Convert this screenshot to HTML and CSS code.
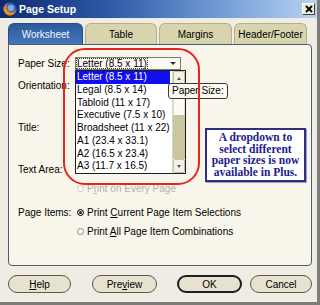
FILE: index.html
```html
<!DOCTYPE html>
<html lang="en">
<head>
    <meta charset="UTF-8">
    <title>Page Setup</title>
    <link rel="stylesheet" href="styles.css">
</head>
<body>
    <div class="window">
        <div class="titlebar">
            <svg class="app-icon" width="14" height="14" viewBox="0 0 14 14">
                <circle cx="7" cy="7" r="6.5" fill="#2f5fb0"/>
                <circle cx="8" cy="6" r="3.2" fill="#7fa8e0"/>
                <path d="M7 0.5 A6.5 6.5 0 1 0 13.5 7 C12.5 10 9 11 6.5 10 C4 9 3.2 6 4.5 3.5 C3 4 2.2 5.5 2.4 7 C1.8 4 4 1 7 0.5 Z" fill="#f08a1c"/>
            </svg>
            <span class="title">Page Setup</span>
            <span class="close">
                <svg width="8" height="8" viewBox="0 0 8 8"><path d="M1 1 L7 7 M7 1 L1 7" stroke="#000" stroke-width="1.8"/></svg>
            </span>
        </div>

        <div class="tabs">
            <div class="tab active" style="width: 75px">Worksheet</div>
            <div class="tab" style="width: 72px">Table</div>
            <div class="tab" style="width: 73px">Margins</div>
            <div class="tab" style="width: 73px">Header/Footer</div>
        </div>

        <div class="panel">
            <div class="row">
                <span class="label">Paper Size:</span>
                <div class="combo">
                    <span class="combo-text">Letter (8.5 x 11)</span>
                    <span class="combo-arrow"></span>
                </div>
            </div>
            <div class="row row-orient"><span class="label">Orientation:</span></div>
            <div class="row row-gap"><span class="label">Title:</span></div>
            <div class="row row-gap"><span class="label">Text Area:</span></div>
            <div class="row row-every">
                <span class="label"></span>
                <span class="radio off"></span>
                <span class="muted">P<u>r</u>int on Every Page</span>
            </div>
            <div class="row row-items">
                <span class="label">Page Items:</span>
                <span class="radio on"></span>
                <span>Print <u>C</u>urrent Page Item Selections</span>
            </div>
            <div class="row row-all">
                <span class="label"></span>
                <span class="radio"></span>
                <span>Print <u>A</u>ll Page Item Combinations</span>
            </div>

            <!-- open dropdown and annotations lie over the form -->
            <div class="paper-list">
                <ul class="items">
                    <li class="selected">Letter (8.5 x 11)</li>
                    <li>Legal (8.5 x 14)</li>
                    <li>Tabloid (11 x 17)</li>
                    <li>Executive (7.5 x 10)</li>
                    <li>Broadsheet (11 x 22)</li>
                    <li>A1 (23.4 x 33.1)</li>
                    <li>A2 (16.5 x 23.4)</li>
                    <li>A3 (11.7 x 16.5)</li>
                </ul>
                <div class="scrollbar">
                    <span class="sb-btn up"></span>
                    <span class="sb-track"></span>
                    <span class="sb-thumb"></span>
                    <span class="sb-btn down"></span>
                </div>
            </div>
            <div class="tooltip">Paper Size:</div>
            <div class="ring"></div>
            <div class="note">A dropdown to<br>select different<br>paper sizes is now<br>available in Plus.</div>
        </div>

        <div class="buttons">
            <div class="btn btn-help"><u>H</u>elp</div>
            <div class="btn btn-preview">Pre<u>v</u>iew</div>
            <div class="btn btn-ok">OK</div>
            <div class="btn btn-cancel">Cancel</div>
        </div>
    </div>
</body>
</html>
```

FILE: styles.css
```css
body {
    margin: 0;
    font-family: "Liberation Sans", Arial, sans-serif;
    font-size: 10px;
    color: #000;
    background: #8a8a86;
}
.window {
    width: 320px;
    height: 305px;
    box-sizing: border-box;
    background: #efede3;
    border-right: 3px solid #7c7c78;
    border-bottom: 3px solid #7c7c78;
}
.titlebar {
    height: 18px;
    display: flex;
    align-items: center;
    padding: 0 2px 0 3px;
    background: linear-gradient(to right, #0d2a72, #2f5aa8 35%, #7ea6dc 75%, #b8d2f0);
}
.app-icon {
    flex: none;
}
.title {
    margin-left: 2px;
    color: #fff;
    font-weight: bold;
    font-size: 10.5px;
}
.close {
    margin-left: auto;
    width: 11px;
    height: 10px;
    display: flex;
    align-items: center;
    justify-content: center;
    background: #ece9d8;
    border: 1px solid;
    border-color: #fff #404040 #404040 #fff;
}
.tabs {
    display: flex;
    gap: 2px;
    margin-top: 5px;
    padding-left: 8px;
    height: 21px;
}
.tab {
    display: flex;
    align-items: center;
    justify-content: center;
    background: #d8d4ad;
    border: 1px solid #b4b08a;
    border-bottom: none;
    border-radius: 6px 6px 0 0;
    box-sizing: border-box;
}
.tab.active {
    background: linear-gradient(#2c5a9c, #4677b8);
    border-color: #264e88;
    color: #f4f6ff;
}
.panel {
    position: relative;
    margin-left: 8px;
    width: 304px;
    height: 222px;
    box-sizing: border-box;
    padding: 11px 0 0 9px;
    background: #f8f6eb;
    border: 1px solid #4c5c74;
    border-radius: 0 4px 4px 4px;
}
.row {
    display: flex;
    align-items: center;
    height: 14px;
}
.row-orient { margin-top: 8px; }
.row-gap { margin-top: 28px; }
.row-every { margin-top: 5px; }
.row-items { margin-top: 10px; }
.row-all { margin-top: 5px; }
.label {
    width: 57px;
    flex: none;
}
.combo {
    width: 106px;
    height: 13px;
    box-sizing: border-box;
    border: 1px solid #7d7b6a;
    background: #fbfaf2;
    display: flex;
    align-items: center;
    padding-left: 1px;
}
.combo-text {
    outline: 1px dotted #333;
    line-height: 9px;
}
.combo-arrow {
    margin-left: auto;
    margin-right: 4px;
    border-left: 3px solid transparent;
    border-right: 3px solid transparent;
    border-top: 3px solid #333;
}
.radio {
    width: 7px;
    height: 7px;
    margin: 0 3px 0 2px;
    border: 1px solid #8a887c;
    border-radius: 50%;
    background: #fff;
    box-sizing: border-box;
}
.radio.on {
    border-color: #222;
    background: #222;
    box-shadow: inset 0 0 0 1px #f8f6eb;
}
.radio.off {
    border-color: #cfcdc0;
}
.muted {
    color: #b4b2a4;
}
.paper-list {
    position: absolute;
    left: 66px;
    top: 25px;
    width: 111px;
    height: 104px;
    box-sizing: border-box;
    border: 1px solid #1e1e1e;
    background: #fff;
    display: flex;
}
.items {
    list-style: none;
    margin: 0;
    padding: 0;
    width: 95px;
}
.items li {
    height: 12.75px;
    line-height: 12.75px;
    padding-left: 1px;
    white-space: nowrap;
}
.items li.selected {
    background: #1010ee;
    color: #fff;
}
.scrollbar {
    margin-left: 2px;
    width: 12px;
    display: flex;
    flex-direction: column;
    border-left: 1px solid #d8d6c8;
}
.sb-btn {
    height: 12px;
    display: flex;
    align-items: center;
    justify-content: center;
    background: #f3f2e8;
    border: 1px solid #c4c1a6;
    border-radius: 2px;
}
.sb-btn::after {
    content: "";
    border-left: 2.5px solid transparent;
    border-right: 2.5px solid transparent;
}
.sb-btn.up::after { border-bottom: 3px solid #555; }
.sb-btn.down::after { border-top: 3px solid #555; }
.sb-track {
    height: 30px;
    background: #fbfaf4;
    border-left: 1px solid #e0ddcc;
    border-right: 1px solid #e0ddcc;
}
.sb-thumb {
    flex: 1;
    background: #cac79e;
}
.tooltip {
    position: absolute;
    left: 159px;
    top: 38px;
    padding: 1px 3px;
    line-height: 12px;
    background: #fbfaf0;
    border: 1px solid #3a3a3a;
    border-radius: 3px;
}
.ring {
    position: absolute;
    left: 54px;
    top: 3px;
    width: 137px;
    height: 137px;
    box-sizing: border-box;
    border: 2px solid #e8241e;
    border-radius: 22px;
}
.note {
    position: absolute;
    left: 196px;
    top: 83px;
    width: 101px;
    height: 54px;
    box-sizing: border-box;
    padding-top: 2px;
    background: #fff;
    border: 2px solid #2e2e82;
    box-shadow: 1px 1px 0 #a0a0bc;
    color: #1c1c8a;
    font-family: "Liberation Serif", "Times New Roman", serif;
    font-weight: bold;
    font-size: 11.5px;
    line-height: 11.5px;
    text-align: center;
}
.buttons {
    display: flex;
    margin-top: 9px;
    padding-left: 8px;
}
.btn {
    height: 18px;
    box-sizing: border-box;
    display: flex;
    align-items: center;
    justify-content: center;
    background: #e7e2cf;
    border: 1px solid #5c5a50;
    border-radius: 9px;
}
.btn-help { width: 63px; }
.btn-preview { width: 65px; margin-left: 21px; }
.btn-ok { width: 65px; margin-left: 20px; border: 2px solid #1e1e1e; }
.btn-cancel { width: 62px; margin-left: 8px; }
```
